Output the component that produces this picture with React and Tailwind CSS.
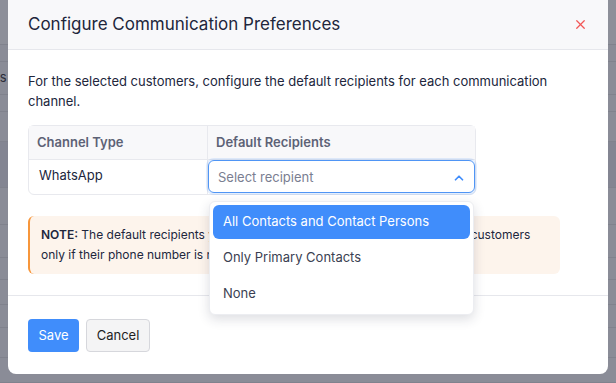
import { ChevronUp, X } from 'lucide-react';

const bgRows = [
  { h: 45, tone: 'bg-[#8d8f99]' },
  { h: 17, tone: 'bg-[#8a8c97]' },
  { h: 33, tone: 'bg-[#8a8c97]', text: 'Customers' },
  { h: 17, tone: 'bg-[#8a8c97]' },
  { h: 30, tone: 'bg-[#8a8c97]' },
  { h: 46, tone: 'bg-[#838592]' },
  { h: 37, tone: 'bg-[#8a8c97]' },
  { h: 33, tone: 'bg-[#8a8c97]' },
  { h: 22, tone: 'bg-[#8a8c97]' },
  { h: 25, tone: 'bg-[#8a8c97]' },
  { h: 23, tone: 'bg-[#8a8c97]' },
  { h: 30, tone: 'bg-[#8a8c97]' },
  { h: 25, tone: 'bg-[#8a8c97]' },
];

const options = ['All Contacts and Contact Persons', 'Only Primary Contacts', 'None'];

function RecipientMenu() {
  return (
    <div className="absolute left-[1px] top-[41px] z-10 w-[265px] rounded-md border border-[#ecedf1] bg-white p-[3px] shadow-[0_4px_12px_rgba(40,45,70,0.16)]">
      <div className="flex flex-col gap-[2px]">
        {options.map((option, i) => (
          <div
            key={option}
            className={`flex h-[34px] items-center rounded-md px-[10px] text-[13px] ${
              i === 0 ? 'bg-[#408dfb] text-white' : 'text-[#3b3f52]'
            }`}
          >
            {option}
          </div>
        ))}
      </div>
    </div>
  );
}

export default function App() {
  return (
    <div className="relative h-[383px] w-[616px] overflow-hidden bg-[#8a8c97] font-['Inter','Liberation_Sans',sans-serif]">
      <div className="flex flex-col">
        {bgRows.map((row, i) => (
          <div
            key={i}
            style={{ height: row.h }}
            className={`flex items-center border-b border-[#80828d] ${row.tone} text-[13px] text-[#2a2d3a]`}
          >
            {row.text && <span className="-ml-[60px]">{row.text}</span>}
          </div>
        ))}
      </div>

      <div className="absolute left-[8px] top-0 flex w-[600px] flex-col rounded-b-lg bg-white text-[#21263c]">
        <div className="flex h-[50px] items-center justify-between border-b border-[#e6e7ec] bg-[#f8f8fa] pl-5 pr-[20px]">
          <h2 className="text-[17px] font-normal">Configure Communication Preferences</h2>
          <X className="h-[15px] w-[15px] text-[#f25757]" strokeWidth={2} />
        </div>

        <div className="flex flex-col border-b border-[#e6e7ec] px-5 pb-[21px] pt-[21px]">
          <p className="text-[13px] leading-5">
            For the selected customers, configure the default recipients for each communication channel.
          </p>

          <div className="mt-[14px] w-[448px] rounded-md border border-[#e8e9ee]">
            <div className="flex h-[34px] border-b border-[#e8e9ee] bg-[#f8f8fa] text-[13px] font-semibold text-[#5d6276]">
              <div className="flex w-[179px] items-center border-r border-[#e8e9ee] px-[8px]">Channel Type</div>
              <div className="flex flex-1 items-center px-[8px]">Default Recipients</div>
            </div>
            <div className="flex h-[34px] text-[13px]">
              <div className="flex w-[179px] items-center border-r border-[#e8e9ee] px-[10px] pb-[3px]">WhatsApp</div>
              <div className="relative flex-1">
                <div className="flex h-[33px] items-center justify-between rounded-md border border-[#4f95f5] pl-[9px] pr-[8px] pt-[2px] shadow-[0_0_0_2px_rgba(64,141,251,0.15)]">
                  <span className="text-[#7a7e91]">Select recipient</span>
                  <ChevronUp className="h-[14px] w-[14px] text-[#408dfb]" strokeWidth={3} />
                </div>
                <RecipientMenu />
              </div>
            </div>
          </div>

          <div className="mt-[21px] w-[532px] rounded-md border-l-2 border-[#f7963b] bg-[#fdf4ec] py-[9px] pl-[11px] pr-3 text-[12px] leading-5 text-[#21263c]">
            <span className="font-semibold">NOTE:</span> The default recipients you select here will be applied to the selected customers
            <br />
            only if their phone number is not mapped to a contact person.
          </div>
        </div>

        <div className="flex gap-[7px] px-5 pb-[22px] pt-[23px]">
          <button className="h-[33px] w-[51px] rounded bg-[#408dfb] text-[13px] text-white">Save</button>
          <button className="h-[33px] w-[64px] rounded border border-[#d6d7dc] bg-[#f4f4f5] text-[13px] text-[#1f1f1f]">
            Cancel
          </button>
        </div>
      </div>
    </div>
  );
}
